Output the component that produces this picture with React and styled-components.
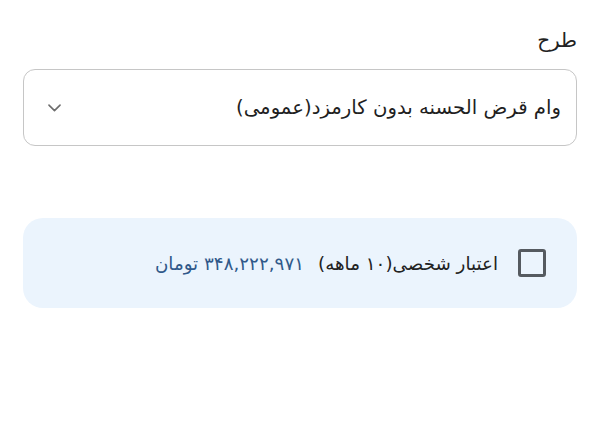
import styled, { createGlobalStyle } from "styled-components";

const Global = createGlobalStyle`
  html, body {
    margin: 0;
    padding: 0;
    background: #fff;
    font-family: "DejaVu Sans", "Noto Sans", sans-serif;
  }
`;

const Page = styled.div`
  direction: rtl;
  width: 600px;
  height: 430px;
  box-sizing: border-box;
  padding: 26px 23px 0 23px;
  display: flex;
  flex-direction: column;
`;

const Label = styled.div`
  font-size: 20px;
  color: #222;
  margin-bottom: 15px;
  line-height: 28px;
`;

const Select = styled.div`
  height: 77px;
  box-sizing: border-box;
  border: 1px solid #c6c6c6;
  border-radius: 12px;
  display: flex;
  align-items: center;
  justify-content: space-between;
  padding: 0 15px 0 21px;
`;

const SelectText = styled.span`
  font-size: 19.7px;
  color: #1f1f1f;
`;

const Chevron = styled.svg`
  width: 19px;
  height: 19px;
  color: #6d6d6d;
`;

const Card = styled.div`
  margin-top: 72px;
  height: 90px;
  background: #ebf4fd;
  border-radius: 20px;
  display: flex;
  align-items: center;
  padding: 0 31px 0 20px;
  gap: 20px;
`;

const Box = styled.span`
  width: 28px;
  height: 28px;
  box-sizing: border-box;
  border: 3px solid #555a60;
  border-radius: 3px;
  flex-shrink: 0;
`;

const Title = styled.span`
  font-size: 18.3px;
  color: #222;
`;

const Amount = styled.span`
  font-size: 18.3px;
  color: #30598a;
  margin-right: 14px;
`;

export default function App() {
  return (
    <>
      <Global />
      <Page>
        <Label>طرح</Label>
        <Select>
          <SelectText>وام قرض الحسنه بدون کارمزد(عمومی)</SelectText>
          <Chevron viewBox="0 0 24 24" fill="none" stroke="currentColor" strokeWidth="2" strokeLinecap="round" strokeLinejoin="round">
            <path d="M5 9l7 7 7-7" />
          </Chevron>
        </Select>
        <Card>
          <Box />
          <Title>
            اعتبار شخصی(۱۰ ماهه)
            <Amount>۳۴۸,۲۲۲,۹۷۱ تومان</Amount>
          </Title>
        </Card>
      </Page>
    </>
  );
}
